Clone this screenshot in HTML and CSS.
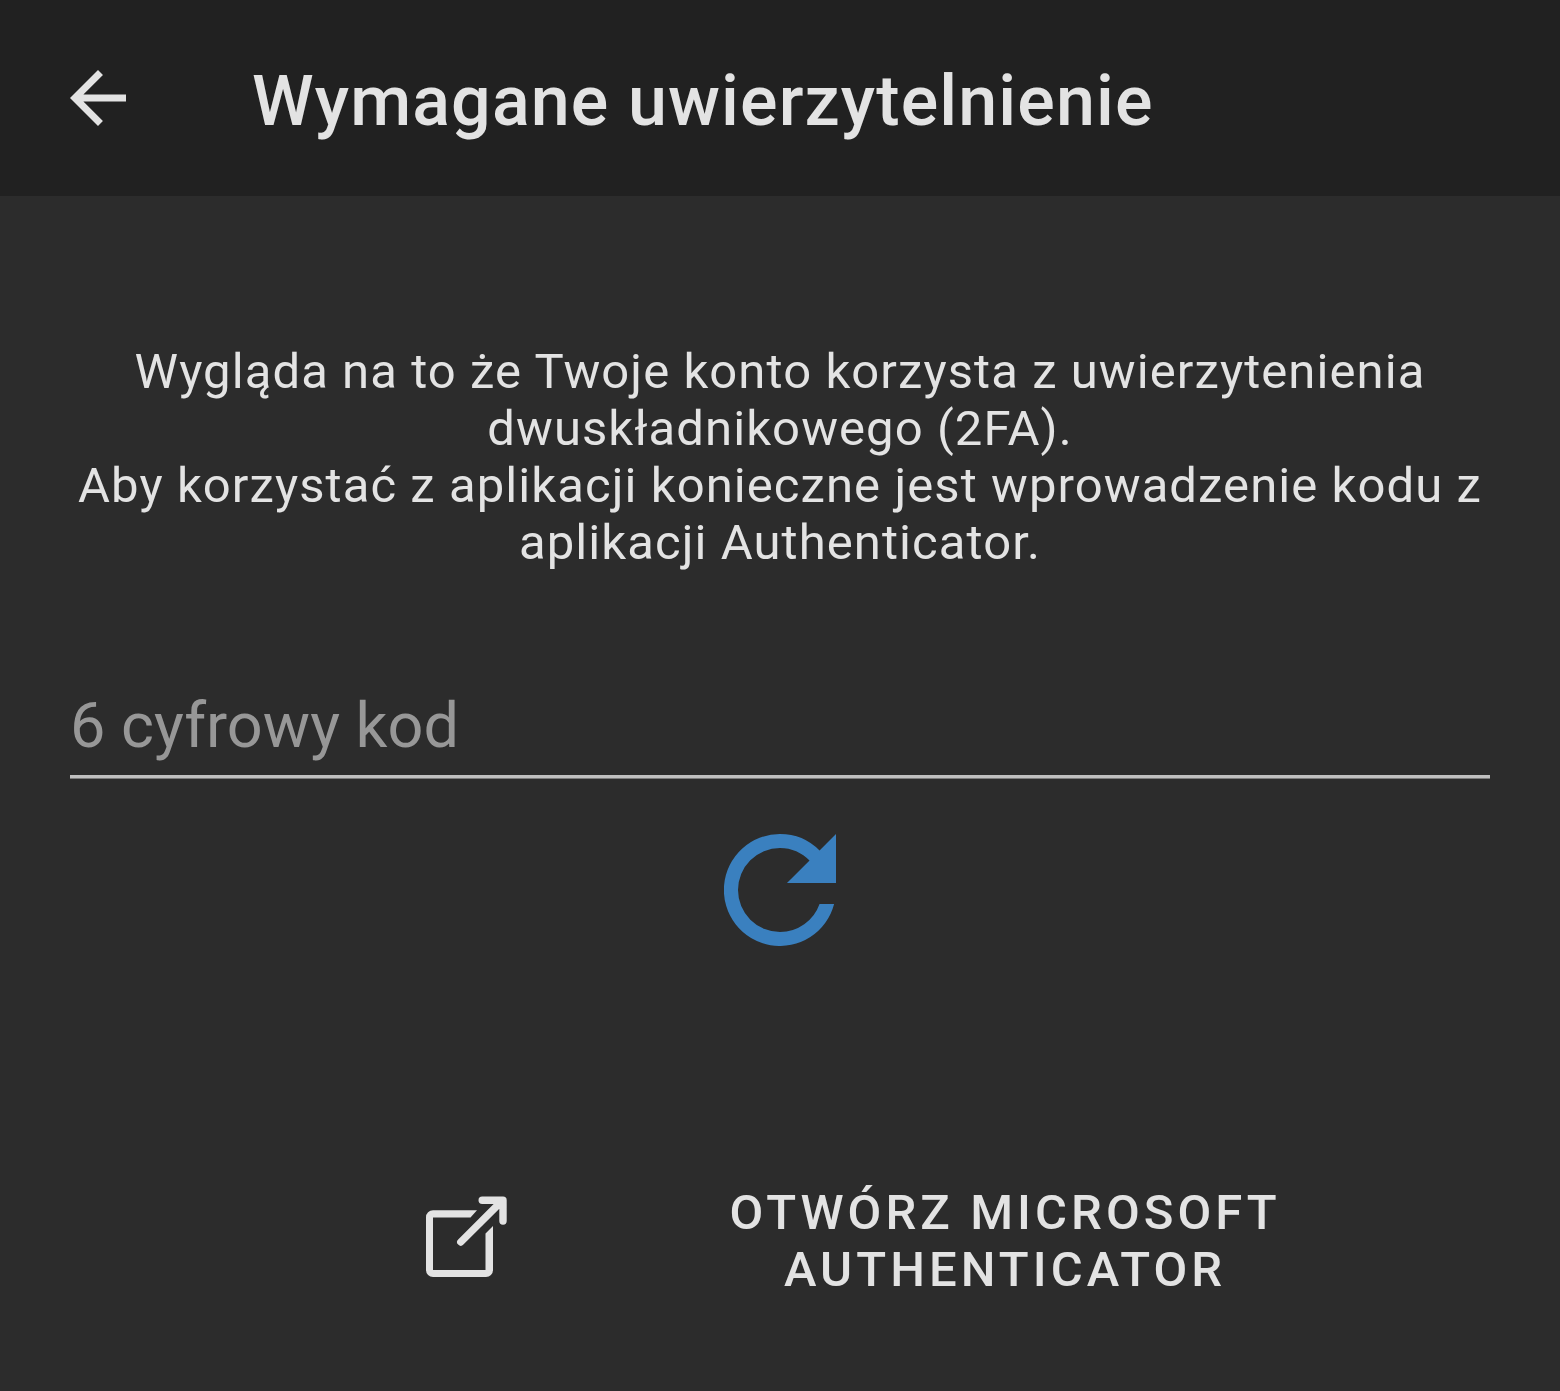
FILE: index.html
```html
<!DOCTYPE html>
<html lang="pl">
<head>
<meta charset="utf-8">
<title>Wymagane uwierzytelnienie</title>
<link rel="stylesheet" href="styles.css">
</head>
<body>
<header class="toolbar">
  <button class="back" aria-label="Wstecz">
    <svg viewBox="4 4 16 16"><path d="M20 11H7.83l5.59-5.59L12 4l-8 8 8 8 1.41-1.41L7.83 13H20z"/></svg>
  </button>
  <h1 class="title">Wymagane uwierzytelnienie</h1>
</header>
<main class="content">
  <p class="message">Wygląda na to że Twoje konto korzysta z uwierzytenienia<br>dwuskładnikowego (2FA).<br>Aby korzystać z aplikacji konieczne jest wprowadzenie kodu z<br>aplikacji Authenticator.</p>
  <input class="code" type="text" placeholder="6 cyfrowy kod">
  <button class="refresh" aria-label="Odśwież">
    <svg viewBox="4 4 16 16"><path d="M17.65 6.35A7.958 7.958 0 0 0 12 4a8 8 0 1 0 7.73 10h-2.08A5.99 5.99 0 0 1 12 18a6 6 0 1 1 0-12c1.66 0 3.14.69 4.22 1.78L13 11h7V4z"/></svg>
  </button>
  <button class="open-app">
    <svg class="open-icon" viewBox="0 0 81 81">
      <path class="open-frame" d="M51 14.2H7a7 7 0 0 0-7 7V74a7 7 0 0 0 7 7H60a7 7 0 0 0 7-7V30L59.5 37.5V74H7V21.5H44.5z"/>
      <path class="open-arrow" d="M34.8 46L76 4.8M56.2 4.2H77V25"/>
    </svg>
    <span class="open-label">OTWÓRZ MICROSOFT<br>AUTHENTICATOR</span>
  </button>
</main>
</body>
</html>
```
FILE: styles.css
```css
* { box-sizing: border-box; }
body {
  margin: 0;
  min-height: 1391px;
  background: #2c2c2c;
  color: #e3e3e3;
  font-family: Roboto, sans-serif;
}
button { border: 0; padding: 0; background: none; color: inherit; font: inherit; }
svg { display: block; }
.toolbar {
  display: flex;
  align-items: center;
  height: 196px;
  padding-left: 70px;
  background: #212121;
}
.back svg { width: 56px; height: 56px; fill: #e3e3e3; }
.title {
  margin: 6px 0 0 126px;
  font-size: 70px;
  line-height: 82px;
  font-weight: 500;
  letter-spacing: 1.12px;
  white-space: nowrap;
}
.content {
  display: flex;
  flex-direction: column;
  align-items: center;
  padding: 147px 70px 0;
}
.message {
  margin: 0;
  font-size: 49px;
  line-height: 57px;
  letter-spacing: 1.08px;
  text-align: center;
  white-space: nowrap;
}
.code {
  width: 1420px;
  height: 108px;
  margin-top: 100px;
  padding: 1px 0 0;
  border: 0;
  outline: 0;
  background: linear-gradient(#c0c0c0 3px, #7c7c7c 3px) bottom / 100% 4px no-repeat;
  color: inherit;
  font: 63px/74px Roboto, sans-serif;
}
.code::placeholder { color: #979797; }
.refresh { margin-top: 55px; }
.refresh svg { width: 112px; height: 112px; fill: #3a80bf; }
.open-app {
  display: flex;
  align-items: center;
  align-self: flex-start;
  margin: 238px 0 0 356px;
}
.open-icon {
  width: 81px;
  height: 81px;
  margin-bottom: 9px;
  overflow: visible;
}
.open-frame { fill: #e3e3e3; }
.open-arrow {
  fill: none;
  stroke: #e3e3e3;
  stroke-width: 7.4;
  stroke-linecap: round;
  stroke-linejoin: round;
}
.open-label {
  margin-left: 222.5px;
  font-size: 49px;
  line-height: 57px;
  font-weight: 500;
  letter-spacing: 4.05px;
  text-align: center;
  white-space: nowrap;
}
```
